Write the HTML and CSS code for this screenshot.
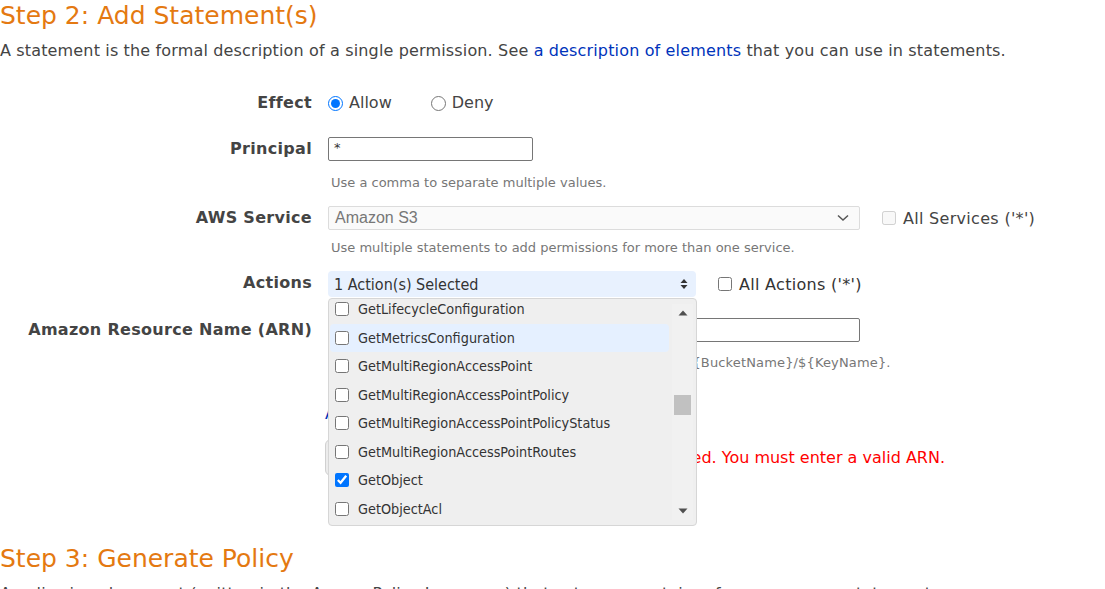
FILE: index.html
```html
<!DOCTYPE html>
<html>
<head>
<meta charset="utf-8">
<link rel="stylesheet" href="styles.css">
</head>
<body>
<div class="page">
  <h2 class="step">Step 2: Add Statement(s)</h2>
  <p class="intro">A statement is the formal description of a single permission. See <a class="link" href="#">a description of elements</a> that you can use in statements.</p>

  <div class="form">
    <div class="row row-effect">
      <div class="label">Effect</div>
      <div class="ctrl radios">
        <label class="radio"><input type="radio" name="eff" checked> <span>Allow</span></label>
        <label class="radio"><input type="radio" name="eff"> <span>Deny</span></label>
      </div>
    </div>

    <div class="row row-principal">
      <div class="label">Principal</div>
      <div class="ctrl">
        <div class="textbox">*</div>
        <div class="hint">Use a comma to separate multiple values.</div>
      </div>
    </div>

    <div class="row row-service">
      <div class="label">AWS Service</div>
      <div class="ctrl">
        <div class="inline">
          <div class="select disabled-select"><span>Amazon S3</span>
            <svg class="chev" width="12" height="8" viewBox="0 0 12 8"><path d="M1 1.5 L6 6 L11 1.5" fill="none" stroke="#555" stroke-width="1.5"/></svg>
          </div>
          <label class="check muted"><input type="checkbox" disabled> <span>All Services ('*')</span></label>
        </div>
        <div class="hint">Use multiple statements to add permissions for more than one service.</div>
      </div>
    </div>

    <div class="row row-actions">
      <div class="label">Actions</div>
      <div class="ctrl">
        <div class="inline">
          <div class="select actions-select"><span>1 Action(s) Selected</span>
            <svg class="updown" width="8" height="12" viewBox="0 0 8 12"><path d="M4 1 L7.5 5 L0.5 5 Z M4 11 L7.5 7 L0.5 7 Z" fill="#333"/></svg>
          </div>
          <label class="check"><input type="checkbox"> <span>All Actions ('*')</span></label>
        </div>

        <div class="dropdown">
          <div class="list">
            <div class="items">
              <label class="item"><input type="checkbox"><span>GetLifecycleConfiguration</span></label>
              <label class="item hover"><input type="checkbox"><span>GetMetricsConfiguration</span></label>
              <label class="item"><input type="checkbox"><span>GetMultiRegionAccessPoint</span></label>
              <label class="item"><input type="checkbox"><span>GetMultiRegionAccessPointPolicy</span></label>
              <label class="item"><input type="checkbox"><span>GetMultiRegionAccessPointPolicyStatus</span></label>
              <label class="item"><input type="checkbox"><span>GetMultiRegionAccessPointRoutes</span></label>
              <label class="item"><input type="checkbox" checked><span>GetObject</span></label>
              <label class="item"><input type="checkbox"><span>GetObjectAcl</span></label>
              <label class="item"><input type="checkbox"><span>GetObjectAttributes</span></label>
            </div>
          </div>
          <div class="scrollbar">
            <svg class="arrow" width="10" height="6" viewBox="0 0 10 6"><path d="M5 0.5 L9.5 5.5 L0.5 5.5 Z" fill="#505050"/></svg>
            <div class="track"><div class="thumb"></div></div>
            <svg class="arrow" width="10" height="6" viewBox="0 0 10 6"><path d="M5 5.5 L9.5 0.5 L0.5 0.5 Z" fill="#505050"/></svg>
          </div>
        </div>
      </div>
    </div>

    <div class="row row-arn">
      <div class="label">Amazon Resource Name (ARN)</div>
      <div class="ctrl">
        <div class="textbox wide"></div>
        <div class="hint arn-hint">ARN should follow the following format: arn:aws:s3:::${BucketName}/${KeyName}.</div>
      </div>
    </div>

    <div class="row row-cond">
      <div class="label"></div>
      <div class="ctrl"><a class="link" href="#">Add Conditions (Optional)</a></div>
    </div>

    <div class="row row-btn">
      <div class="label"></div>
      <div class="ctrl btn-line">
        <button class="btn">Add Statement</button>
        <span class="error">The ARN field is required. You must enter a valid ARN.</span>
      </div>
    </div>
  </div>

  <h2 class="step step3">Step 3: Generate Policy</h2>
  <p class="intro intro3">A policy is a document (written in the Access Policy Language) that acts as a container for one or more statements.</p>
</div>
</body>
</html>
```

FILE: styles.css
```css
html, body {
  margin: 0;
  padding: 0;
  background: #ffffff;
}
body {
  font-family: "DejaVu Sans", Verdana, sans-serif;
  color: #444444;
  font-size: 16px;
  overflow: hidden;
}
.step {
  margin: 0;
  font-weight: normal;
  font-size: 25px;
  line-height: 32px;
  color: #e47911;
}
.intro {
  margin: 9px 0 0 0;
  font-size: 16px;
  line-height: 20px;
  letter-spacing: 0.15px;
  color: #444444;
}
.link {
  color: #0033bb;
  text-decoration: none;
}
.form {
  margin-top: 30px;
  display: flex;
  flex-direction: column;
}
.row {
  display: grid;
  grid-template-columns: 312px 1fr;
  column-gap: 16px;
  align-items: start;
}
.label {
  text-align: right;
  font-weight: bold;
  font-size: 16px;
  line-height: 24px;
  letter-spacing: 0.3px;
  color: #444444;
}
.ctrl {
  min-width: 0;
}
.radios {
  display: flex;
  gap: 39px;
  line-height: 24px;
}
.radio {
  display: flex;
  align-items: center;
  gap: 6px;
}
.radio input {
  width: 15px;
  height: 15px;
  margin: 0;
}
.row-principal {
  margin-top: 22px;
}
.textbox {
  box-sizing: border-box;
  width: 205px;
  height: 24px;
  border: 1px solid #767676;
  border-radius: 2px;
  padding: 0 5px;
  font-size: 13px;
  line-height: 20px;
  color: #333;
}
.hint {
  margin-top: 14px;
  margin-left: 3px;
  font-size: 13px;
  line-height: 16px;
  color: #777777;
}
.row-service {
  margin-top: 15px;
}
.inline {
  display: flex;
  align-items: center;
}
.select {
  box-sizing: border-box;
  display: flex;
  align-items: center;
  justify-content: space-between;
  padding: 0 6px;
  font-size: 16px;
}
.disabled-select {
  width: 532px;
  height: 24px;
  background: #fafafa;
  border: 1px solid #dcdcdc;
  border-radius: 2px;
  color: #777777;
  font-family: "Liberation Sans", Arial, sans-serif;
}
.chev {
  margin-right: 4px;
}
.check {
  display: flex;
  align-items: center;
  gap: 7px;
  margin-left: 22px;
  color: #333333;
  letter-spacing: 0.3px;
}
.check input {
  width: 14px;
  height: 14px;
  margin: 0;
}
.check.muted {
  color: #444444;
}
.row-service .hint {
  margin-top: 10px;
}
.row-actions {
  margin-top: 15px;
  position: relative;
  z-index: 5;
}
.actions-select {
  width: 368px;
  height: 26px;
  background: #e8f1fe;
  border-radius: 4px;
  color: #333333;
  font-family: "DejaVu Sans Condensed", "DejaVu Sans", sans-serif;
}
.updown {
  margin-right: 2px;
}
.dropdown {
  position: absolute;
  left: 328px;
  top: 27px;
  width: 369px;
  height: 228px;
  box-sizing: border-box;
  border: 1px solid #d6d6d6;
  border-radius: 4px;
  background: #efefef;
  display: flex;
  overflow: hidden;
}
.list {
  flex: 1;
  overflow: hidden;
  padding: 0 3px 0 1px;
}
.items {
  margin-top: -4px;
}
.item {
  display: flex;
  align-items: center;
  height: 28.5px;
  padding-left: 5px;
  border-radius: 4px;
  font-family: "DejaVu Sans Condensed", "DejaVu Sans", sans-serif;
  font-size: 14.3px;
  color: #333333;
}
.item.hover {
  background: #e5f0ff;
}
.item input {
  width: 14px;
  height: 14px;
  margin: 0 9px 0 0;
}
.scrollbar {
  width: 21px;
  margin: 5px 3px 5px 0;
  background: #f1f1f1;
  display: flex;
  flex-direction: column;
  align-items: center;
}
.scrollbar .arrow {
  margin: 6px 0;
}
.track {
  flex: 1;
  width: 100%;
  position: relative;
}
.thumb {
  position: absolute;
  left: 2px;
  right: 2px;
  top: 73px;
  height: 20px;
  background: #c1c1c1;
}
.row-arn {
  margin-top: 21px;
}
.textbox.wide {
  width: 532px;
}
.row-arn .hint {
  margin-top: 13px;
}
.arn-hint {
  letter-spacing: 0.15px;
}
.row-cond {
  margin-top: 33px;
  font-size: 16px;
  line-height: 20px;
}
.row-cond .ctrl {
  margin-left: -3px;
}
.row-btn {
  margin-top: 15px;
}
.btn-line {
  margin-left: -3px;
  width: 620px;
  display: flex;
  align-items: center;
  justify-content: space-between;
}
.btn {
  height: 37px;
  padding: 0 16px;
  border: 1px solid #d0d0d0;
  border-radius: 6px;
  background: #ececec;
  font-family: inherit;
  font-size: 16px;
  color: #333;
}
.error {
  color: #ff0000;
  font-size: 16px;
  white-space: nowrap;
}
.step3 {
  margin-top: 67px;
}
.intro3 {
  margin-top: 9px;
}
```
